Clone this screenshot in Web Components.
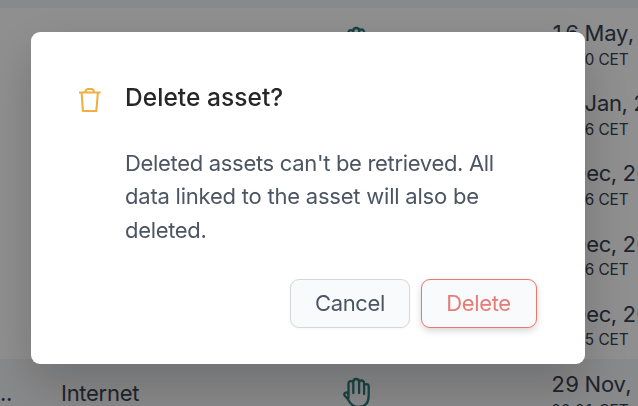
<!DOCTYPE html>
<html lang="en">
<head>
<meta charset="utf-8">
<title>Assets</title>
<style>
    body {
        margin: 0;
        height: 406px;
        overflow: hidden;
        background: #fff;
        font-family: Inter, "Liberation Sans", sans-serif;
        color: #374151;
    }
    .loose {
        letter-spacing: -0.22px;
    }
</style>
</head>
<body>
<asset-table>
    <asset-row time="00:00 CET">16 May, 2023</asset-row>
    <asset-row time="00:06 CET">24 Jan, 2023</asset-row>
    <asset-row time="00:06 CET">6 Dec, 2022</asset-row>
    <asset-row time="00:06 CET">6 Dec, 2022</asset-row>
    <asset-row time="00:05 CET">6 Dec, 2022</asset-row>
    <asset-row shaded name=".." type="Internet" time="00:01 CET">29 Nov, 2022</asset-row>
</asset-table>
<confirm-dialog>
    <span slot="title">Delete asset?</span>
    Deleted assets can't be retrieved. All <span class="loose">data linked to the asset will also be</span> deleted.
    <dialog-button slot="actions">Cancel</dialog-button>
    <dialog-button slot="actions" variant="danger">Delete</dialog-button>
</confirm-dialog>

<script>
(function () {

    class AssetTable extends HTMLElement {
        constructor() {
            super();
            this.attachShadow({ mode: 'open' });
            this.shadowRoot.innerHTML = `
                <style>
                    :host {
                        display: flex;
                        flex-direction: column;
                        height: 406px;
                        overflow: hidden;
                    }
                    .head {
                        flex: none;
                        height: 8px;
                        background: #f3f4f6;
                    }
                </style>
                <div class="head"></div>
                <slot></slot>
            `;
        }
    }

    class AssetRow extends HTMLElement {
        constructor() {
            super();
            this.attachShadow({ mode: 'open' });

            const name = this.getAttribute('name') || '';
            const type = this.getAttribute('type') || '';
            const time = this.getAttribute('time') || '';

            this.shadowRoot.innerHTML = `
                <style>
                    :host {
                        display: grid;
                        grid-template-columns: 61px 280px 210px 1fr;
                        flex: none;
                        height: 70.2px;
                        white-space: nowrap;
                        font-size: 22px;
                        line-height: 30px;
                        letter-spacing: -0.28px;
                    }
                    :host([shaded]) {
                        background: #f3f4f6;
                    }
                    .name, .type {
                        padding-top: 19px;
                    }
                    svg {
                        display: block;
                        margin-top: 18px;
                    }
                    .date {
                        padding-top: 10px;
                        font-variant-numeric: tabular-nums;
                    }
                    small {
                        display: block;
                        padding-top: 1.6px;
                        font-size: 15.4px;
                        line-height: 20px;
                        letter-spacing: -0.12px;
                    }
                </style>
                <div class="name">${name}</div>
                <div class="type">${type}</div>
                <svg width="32" height="32" viewBox="0 0 32 32" fill="none" stroke="#2c787a" stroke-width="2.3" stroke-linecap="round" stroke-linejoin="round">
                    <path d="M7.5 21V6.5a2.4 2.4 0 0 1 4.8 0V16V4.9a2.9 2.9 0 0 1 5.8 0V16V6a2.5 2.5 0 0 1 5 0V17V9.5a2.3 2.3 0 0 1 4.6 0V18c0 7-3 12-10 12c-6 0-9-4-11-8l-3.3-3.7a2.2 2.2 0 0 1 3.1-2.6L7.5 18"/>
                </svg>
                <div class="date"><slot></slot><small>${time}</small></div>
            `;
        }
    }

    class ConfirmDialog extends HTMLElement {
        constructor() {
            super();
            this.attachShadow({ mode: 'open' });
            this.shadowRoot.innerHTML = `
                <style>
                    :host {
                        position: fixed;
                        inset: 0;
                        box-sizing: border-box;
                        padding: 32px 53px 42px 31px;
                        display: grid;
                        background: rgba(0, 0, 0, 0.44);
                    }
                    .panel {
                        box-sizing: border-box;
                        display: grid;
                        grid-template-columns: 46px 1fr;
                        grid-template-rows: 33px 1fr 49px;
                        padding: 49px 48px 36px;
                        border-radius: 9px;
                        background: #fff;
                        box-shadow: 0 20px 50px rgba(0, 0, 0, 0.2);
                    }
                    svg {
                        display: block;
                        margin: 6px 0 0;
                    }
                    h2 {
                        margin: 0;
                        font-size: 24.5px;
                        font-weight: 500;
                        line-height: 33px;
                        letter-spacing: 0.05px;
                        color: #262626;
                    }
                    p {
                        grid-column: 2;
                        margin: 33px 0 0;
                        font-size: 22px;
                        line-height: 33.4px;
                        letter-spacing: -0.32px;
                        color: #4b5563;
                    }
                    .actions {
                        grid-column: 1 / 3;
                        display: flex;
                        justify-content: flex-end;
                        gap: 11px;
                    }
                </style>
                <div class="panel">
                    <svg width="24" height="28" viewBox="0 0 24 28" fill="none" stroke="#efb041" stroke-width="2.1" stroke-linejoin="round">
                        <path d="M0 5.5h21.5M6 5.5L7.2 3Q7.7 2 8.7 2h4Q13.7 2 14.2 3L15.5 5.5M2.6 5.5L3.9 24h13.4L18.9 5.5"/>
                    </svg>
                    <h2><slot name="title"></slot></h2>
                    <p><slot></slot></p>
                    <div class="actions"><slot name="actions"></slot></div>
                </div>
            `;
        }
    }

    class DialogButton extends HTMLElement {
        constructor() {
            super();
            this.attachShadow({ mode: 'open' });
            this.shadowRoot.innerHTML = `
                <style>
                    :host {
                        display: block;
                        width: 120px;
                    }
                    :host([variant="danger"]) {
                        width: 116px;
                    }
                    button {
                        box-sizing: border-box;
                        display: block;
                        width: 100%;
                        height: 49px;
                        padding: 0 0 2px;
                        border: 1px solid #d5d7da;
                        border-radius: 9px;
                        background: #f9fafb;
                        box-shadow: 0 1px 3px rgba(0, 0, 0, 0.04);
                        font: inherit;
                        font-size: 22px;
                        letter-spacing: -0.35px;
                        color: #4b5563;
                    }
                    :host([variant="danger"]) button {
                        padding-right: 1px;
                        border-color: #e97772;
                        box-shadow: 0 3px 7px rgba(0, 0, 0, 0.16);
                        color: #e77b77;
                    }
                </style>
                <button type="button"><slot></slot></button>
            `;
        }
    }

    customElements.define('asset-table', AssetTable);
    customElements.define('asset-row', AssetRow);
    customElements.define('confirm-dialog', ConfirmDialog);
    customElements.define('dialog-button', DialogButton);

})();
</script>
</body>
</html>
